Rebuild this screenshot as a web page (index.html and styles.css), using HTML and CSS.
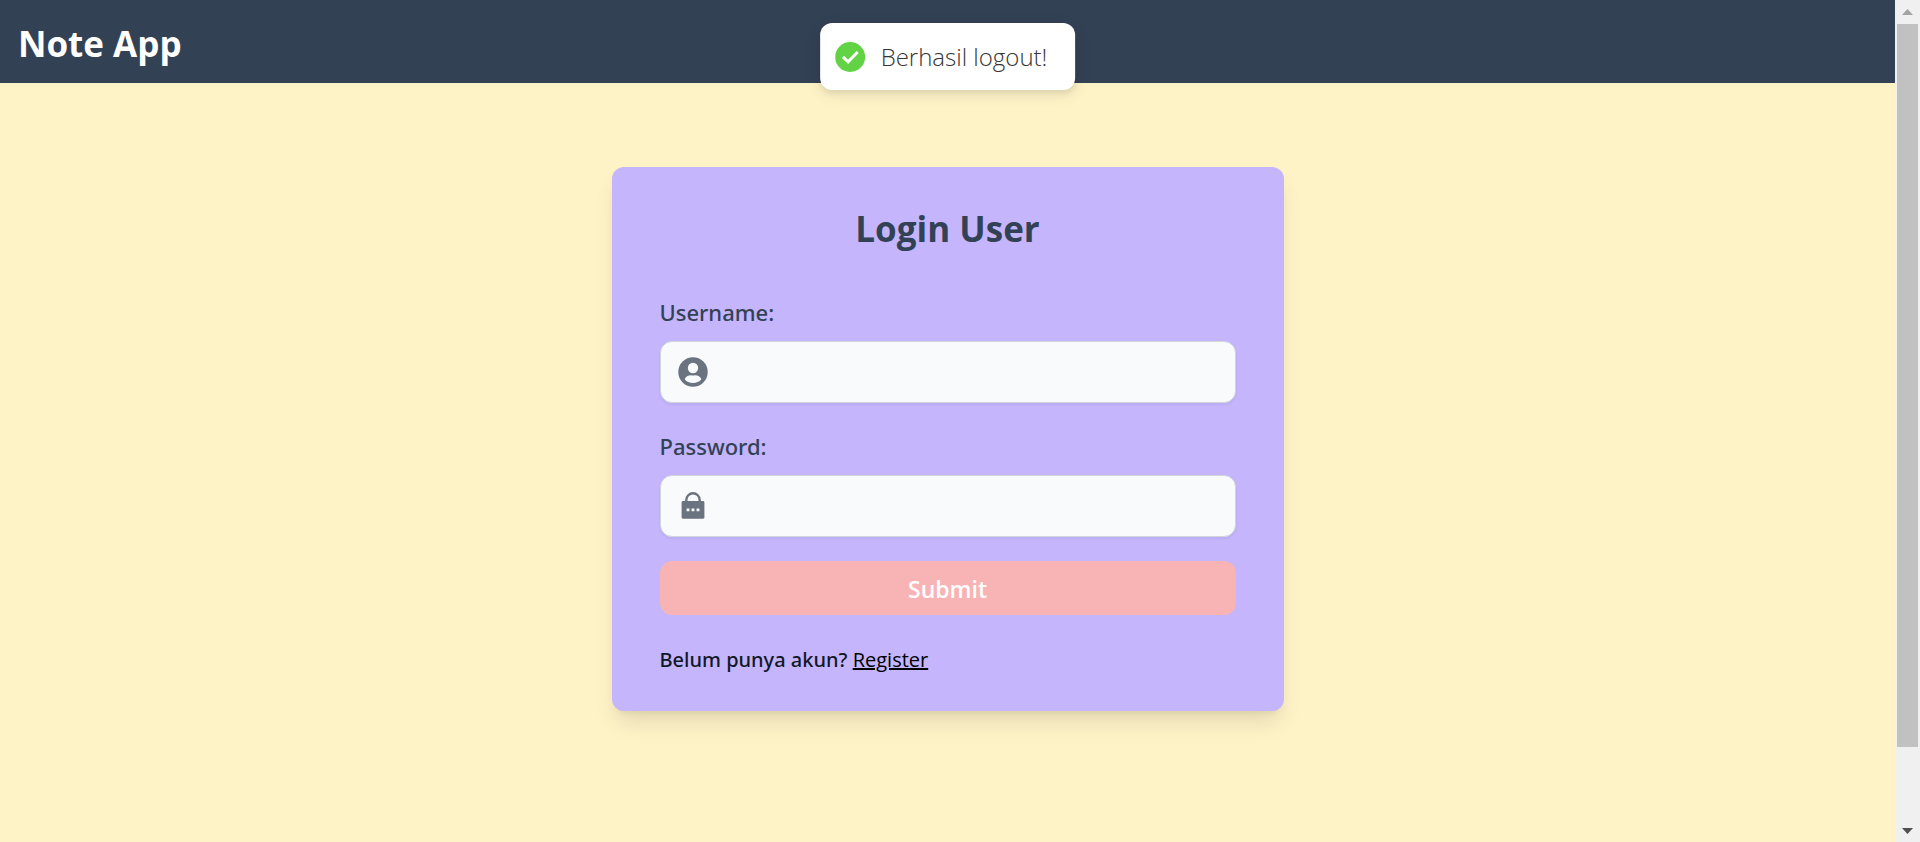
FILE: index.html
```html
<!DOCTYPE html>
<html lang="id">
<head>
<meta charset="utf-8">
<title>Note App</title>
<link rel="stylesheet" href="styles.css">
</head>
<body>
<div class="page">
  <header class="navbar"><h1 class="brand">Note App</h1></header>
  <main class="main">
    <form class="card">
      <h2 class="card-title">Login User</h2>
      <div class="field">
        <label class="label" for="username">Username:</label>
        <div class="control">
          <svg class="icon" viewBox="0 0 30 30" aria-hidden="true"><circle cx="15" cy="15" r="14.7" fill="#6b7280"/><circle cx="15" cy="11" r="5.2" fill="#f9fafb"/><path fill="#f9fafb" d="M6.7 22.2c.7-2.6 4-4 6.300-3.900 1.300.4 2.700.4 4 0 2.300-.1 5.600 1.300 6.300 3.900C21.500 24.700 18.500 26 15 26s-6.500-1.300-8.300-3.800z"/></svg>
          <input class="input" id="username" type="text">
        </div>
      </div>
      <div class="field">
        <label class="label" for="password">Password:</label>
        <div class="control">
          <svg class="icon" viewBox="0 0 30 30" aria-hidden="true"><path fill="none" stroke="#6b7280" stroke-width="2.400" d="M8.300 11V9a6.700 6.700 0 0 1 13.400 0v2"/><rect x="3.600" y="10" width="22.800" height="17.700" rx="1.400" fill="#6b7280"/><path fill="#f9fafb" d="M8.600 17.400h2.800v2.800H8.600zM13.600 17.400h2.800v2.800h-2.800zM18.600 17.400h2.800v2.800h-2.800z"/></svg>
          <input class="input" id="password" type="password">
        </div>
      </div>
      <button class="submit" type="submit">Submit</button>
      <p class="note">Belum punya akun? <a class="link" href="#register">Register</a></p>
    </form>
  </main>
  <div class="toast" role="status">
    <svg class="toast-icon" viewBox="0 0 30 30" aria-hidden="true"><circle cx="15" cy="15" r="15" fill="#61d345"/><path d="M7.800 14.800l5.200 5 9.500-9.800" fill="none" stroke="#fff" stroke-width="3"/></svg>
    <span>Berhasil logout!</span>
  </div>
</div>
<div class="scrollbar" aria-hidden="true">
  <svg class="arrow" viewBox="0 0 25 24"><path d="M7 15h11l-5.500-6z" fill="#a3a3a3"/></svg>
  <div class="track"><div class="thumb"></div></div>
  <svg class="arrow" viewBox="0 0 25 24"><path d="M7 10h11l-5.500 6z" fill="#505050"/></svg>
</div>
</body>
</html>
```
FILE: styles.css
```css
*, *::before, *::after { box-sizing: border-box; }

body {
  margin: 0;
  min-height: 100vh;
  display: flex;
  background: #fef3c7;
  font-family: "Segoe UI", "Open Sans", "Noto Sans", sans-serif;
  color: #111827;
}

h1, h2, p { margin: 0; }

.page { position: relative; flex: 1; }

.navbar {
  padding: 20px 18px 16px;
  background: #334155;
}

.brand {
  font-size: 35px;
  line-height: 47px;
  font-weight: 700;
  color: #fff;
}

.main {
  display: flex;
  justify-content: center;
  padding: 84px 24px;
}

.card {
  width: 100%;
  max-width: 672px;
  padding: 38px 48px 36px;
  border-radius: 12px;
  background: #c4b5fd;
  box-shadow: 0 15px 22px -4px rgba(0, 0, 0, 0.1), 0 6px 9px -6px rgba(0, 0, 0, 0.1);
}

.card-title {
  margin-bottom: 40px;
  font-size: 35px;
  line-height: 48px;
  font-weight: 700;
  text-align: center;
  color: #334155;
}

.field {
  display: flex;
  flex-direction: column;
  gap: 10px;
  margin-bottom: 24px;
}

.label {
  font-family: "Segoe UI", "Noto Sans", sans-serif;
  font-size: 22px;
  line-height: 38px;
  font-weight: 500;
  color: #334155;
}

.control {
  display: flex;
  align-items: center;
  height: 62px;
  padding-left: 17px;
  border: 1px solid #d1d5db;
  border-radius: 12px;
  background: #f9fafb;
  box-shadow: 0 2px 3px rgba(0, 0, 0, 0.05);
}

.icon { width: 30px; height: 30px; flex: none; }

.input {
  flex: 1;
  min-width: 0;
  height: 100%;
  padding: 0 12px;
  border: 0;
  border-radius: 12px;
  outline: 0;
  background: transparent;
  font: inherit;
  font-size: 22px;
}

.submit {
  display: block;
  width: 100%;
  padding: 10px 24px 8px;
  border: 0;
  border-radius: 12px;
  background: #f8b4b4;
  color: #fff;
  font-family: inherit;
  font-size: 23px;
  line-height: 36px;
  font-weight: 600;
}

.note {
  margin-top: 30px;
  font-family: "Segoe UI", "Noto Sans", sans-serif;
  font-size: 20px;
  line-height: 30px;
  font-weight: 500;
}

.link {
  font-family: "Segoe UI", "Open Sans", sans-serif;
  font-weight: 400;
  color: #000;
  text-decoration: underline;
  text-decoration-thickness: 2px;
}

.toast {
  position: absolute;
  top: 23px;
  left: 50%;
  transform: translateX(-50%);
  display: flex;
  align-items: center;
  gap: 16px;
  padding: 15px 28px 15px 15px;
  border-radius: 12px;
  background: #fff;
  color: #363636;
  font-size: 24px;
  font-weight: 300;
  line-height: 37px;
  white-space: nowrap;
  box-shadow: 0 4px 15px rgba(0, 0, 0, 0.1), 0 4px 4px rgba(0, 0, 0, 0.05);
}

.toast-icon { width: 30px; height: 30px; }

.scrollbar {
  position: sticky;
  top: 0;
  display: flex;
  flex-direction: column;
  width: 25px;
  height: 100vh;
  background: #f0f0f0;
}

.arrow { width: 25px; height: 24px; }

.track { flex: 1; padding: 0 2px; }

.thumb { height: 91%; background: #c1c1c1; }
```
